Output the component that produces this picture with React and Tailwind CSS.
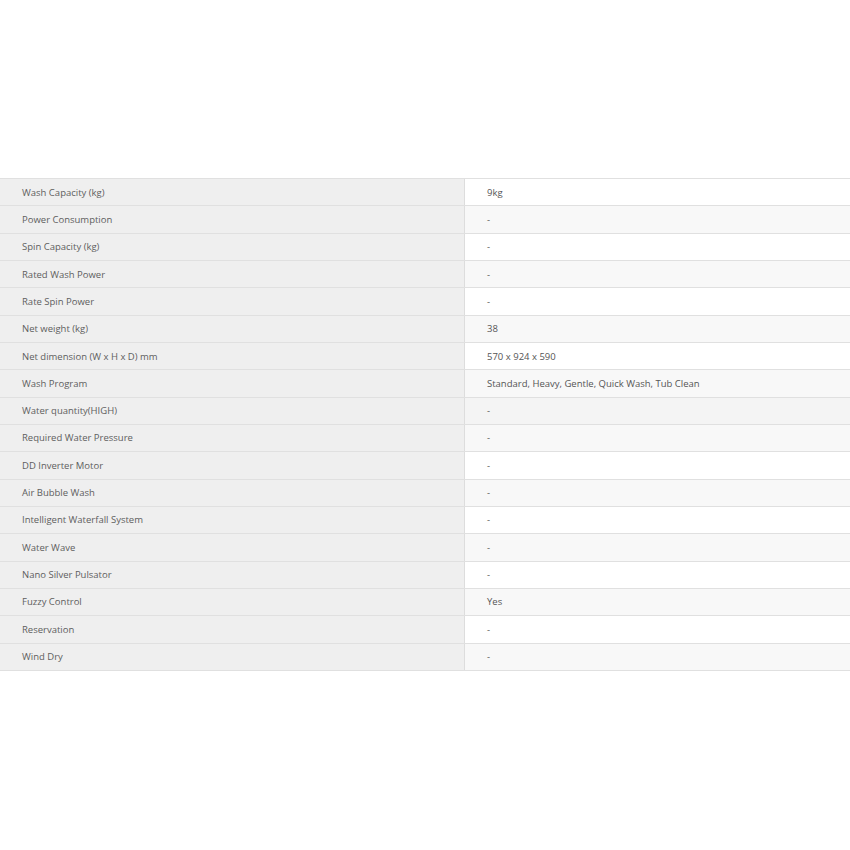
import React from "react";

const specs = [
  ["Wash Capacity (kg)", "9kg"],
  ["Power Consumption", "-"],
  ["Spin Capacity (kg)", "-"],
  ["Rated Wash Power", "-"],
  ["Rate Spin Power", "-"],
  ["Net weight (kg)", "38"],
  ["Net dimension (W x H x D) mm", "570 x 924 x 590"],
  ["Wash Program", "Standard, Heavy, Gentle, Quick Wash, Tub Clean"],
  ["Water quantity(HIGH)", "-"],
  ["Required Water Pressure", "-"],
  ["DD Inverter Motor", "-"],
  ["Air Bubble Wash", "-"],
  ["Intelligent Waterfall System", "-"],
  ["Water Wave", "-"],
  ["Nano Silver Pulsator", "-"],
  ["Fuzzy Control", "Yes"],
  ["Reservation", "-"],
  ["Wind Dry", "-"],
];

const rowBg = (i) => {
  // row 9 sits under the pointer in the shot
  if (i === 8) return "bg-[#f4f4f4]";
  if (i === 9) return "bg-[#f8f8f8]";
  return i % 2 === 1 ? "bg-[#f8f8f8]" : "bg-white";
};

const App = () => {
  return (
    <div
      className="w-[850px] h-[850px] bg-white pt-[178px]"
      style={{ fontFamily: '"Open Sans", "Liberation Sans", sans-serif' }}
    >
      <div className="border-t border-[#e0e0e0]">
        {specs.map(([label, value], i) => (
          <div
            key={label}
            className="flex h-[27.33px] border-b border-[#e0e0e0] text-[9.5px]"
          >
            <div className="w-[465px] shrink-0 flex items-center pl-[22px] pt-px bg-[#efefef] border-r border-[#dddddd] text-[#5e5e5e]">
              {label}
            </div>
            <div className={`flex-1 flex items-center pl-[22px] pt-px text-[#555] ${rowBg(i)}`}>
              {value}
            </div>
          </div>
        ))}
      </div>
    </div>
  );
};

export default App;
